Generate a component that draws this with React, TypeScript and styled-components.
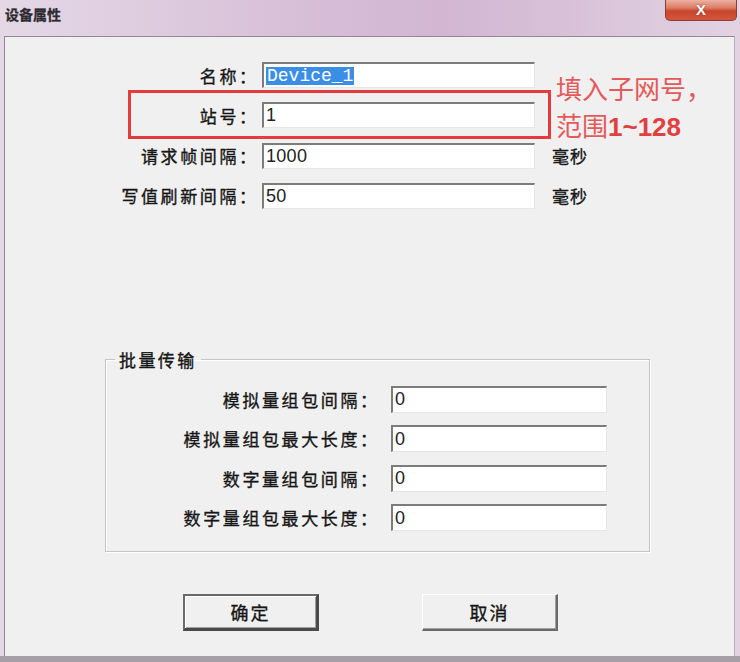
import styled, { createGlobalStyle } from "styled-components";

const GlobalStyle = createGlobalStyle`
  html, body {
    margin: 0;
    padding: 0;
    background: #d9c9d9;
  }
  body {
    font-family: "Noto Sans CJK SC", "Liberation Sans", sans-serif;
  }
`;

const Frame = styled.div`
  width: 740px;
  height: 662px;
  display: flex;
  flex-direction: column;
  box-sizing: border-box;
  padding: 0 5px 0 4px;
  background: linear-gradient(90deg, #e4d8e6 0%, #d6bcd6 45%, #d2b6d2 60%, #e2d2e2 100%);
  border-bottom: 6px solid #a79fa7;
`;

const TitleBar = styled.div`
  height: 36px;
  flex: none;
  display: flex;
  justify-content: space-between;
  align-items: flex-start;
  margin-right: -2px;
`;

const Title = styled.div`
  padding: 4px 0 0 1px;
  font-size: 14px;
  font-weight: 700;
  color: #2e2a30;
  letter-spacing: 0;
  -webkit-text-stroke: 0.3px #2e2a30;
`;

const CloseButton = styled.div`
  width: 72px;
  height: 21px;
  box-sizing: border-box;
  border: 1px solid #8e3d33;
  border-top: none;
  border-radius: 0 0 5px 5px;
  background: linear-gradient(180deg, #eab2a4 0%, #dc7a62 40%, #c9452c 55%, #d0583c 100%);
  color: #fff;
  font-family: "Liberation Sans", sans-serif;
  font-weight: 700;
  font-size: 15px;
  line-height: 19px;
  text-align: center;
  text-shadow: 0 0 2px #7a2a1e;
`;

const Client = styled.div`
  flex: 1;
  position: relative;
  background: #f0f0f0;
  border: 1px solid #8c8a8c;
  border-right-color: #b9b0b9;
  border-bottom: none;
`;

const FieldGrid = styled.div<{ $label: number; $input: number; $gap: number; $rowGap: number; $rowHeight: number }>`
  display: grid;
  grid-template-columns: ${(p) => `${p.$label}px ${p.$input}px auto`};
  grid-auto-rows: ${(p) => p.$rowHeight}px;
  column-gap: ${(p) => p.$gap}px;
  row-gap: ${(p) => p.$rowGap}px;
  align-items: center;
`;

const TopFields = styled(FieldGrid)`
  padding-top: 25px;
`;

const Label = styled.div`
  text-align: right;
  font-size: 17px;
  letter-spacing: 2.6px;
  margin-right: -2.6px;
  color: #161616;
  white-space: nowrap;
  -webkit-text-stroke: 0.35px #161616;
`;

const Field = styled.div`
  height: 100%;
  box-sizing: border-box;
  background: #fff;
  border-top: 2px solid #7c7c7c;
  border-left: 2px solid #7c7c7c;
  border-right: 1px solid #e6e6e6;
  border-bottom: 1px solid #e6e6e6;
  padding-left: 2px;
  display: flex;
  align-items: center;
  font-family: "Liberation Sans", sans-serif;
  font-size: 18px;
  letter-spacing: 0.3px;
  color: #222;
`;

const Selected = styled.span`
  background: #3a8ee6;
  color: #fff;
  font-family: "Liberation Mono", monospace;
  font-size: 18px;
  letter-spacing: 0;
  line-height: 18px;
  padding: 0 1px;
`;

const Unit = styled.div`
  padding-left: 11px;
  font-size: 17px;
  letter-spacing: 1px;
  color: #161616;
  -webkit-text-stroke: 0.35px #161616;
`;

const Highlight = styled.div`
  position: absolute;
  left: 123px;
  top: 53px;
  width: 423px;
  height: 49px;
  box-sizing: border-box;
  border: 3px solid #e43c3c;
`;

const Note = styled.div`
  position: absolute;
  left: 551px;
  top: 32px;
  font-size: 26px;
  line-height: 37px;
  color: #e45a5a;
  white-space: nowrap;
  b {
    font-family: "Liberation Sans", sans-serif;
    font-weight: 700;
    color: #e04040;
  }
`;

const GroupBox = styled.fieldset`
  margin: 141px 0 0 100px;
  width: 545px;
  height: 202px;
  box-sizing: border-box;
  padding: 0;
  border: 1px solid #c4c4c4;
  box-shadow: inset 1px 1px 0 #fff, 1px 1px 0 #fff;
  legend {
    margin-left: 9px;
    padding: 0 4px;
    font-size: 17px;
    line-height: 20px;
    letter-spacing: 2.4px;
    color: #161616;
    -webkit-text-stroke: 0.35px #161616;
  }
`;

const GroupFields = styled(FieldGrid)`
  padding-top: 16px;
`;

const ButtonRow = styled.div`
  display: flex;
  gap: 103px;
  margin: 42px 0 0 178px;
`;

const Button = styled.button<{ $default?: boolean }>`
  width: 136px;
  height: 37px;
  box-sizing: border-box;
  background: #f0f0f0;
  font-family: "Noto Sans CJK SC", sans-serif;
  font-size: 18px;
  letter-spacing: 2px;
  color: #161616;
  -webkit-text-stroke: 0.35px #161616;
  padding: 0;
  border-style: solid;
  border-width: ${(p) => (p.$default ? "2px 3px 3px 2px" : "1px 2px 2px 1px")};
  border-color: ${(p) =>
    p.$default ? "#6a6a6a #4a4a4a #4a4a4a #6a6a6a" : "#ffffff #6a6a6a #6a6a6a #ffffff"};
  box-shadow: ${(p) => (p.$default ? "inset 1px 1px 0 #fff, inset -1px -1px 0 #a0a0a0" : "inset -1px -1px 0 #a0a0a0")};
`;

const topRows = [
  { label: "名称：", value: "Device_1", selected: true },
  { label: "站号：", value: "1" },
  { label: "请求帧间隔：", value: "1000", unit: "毫秒" },
  { label: "写值刷新间隔：", value: "50", unit: "毫秒" },
];

const groupRows = [
  { label: "模拟量组包间隔：", value: "0" },
  { label: "模拟量组包最大长度：", value: "0" },
  { label: "数字量组包间隔：", value: "0" },
  { label: "数字量组包最大长度：", value: "0" },
];

export default function App() {
  return (
    <>
      <GlobalStyle />
      <Frame>
        <TitleBar>
          <Title>设备属性</Title>
          <CloseButton>X</CloseButton>
        </TitleBar>
        <Client>
          <TopFields $label={251} $input={273} $gap={6} $rowGap={14.3} $rowHeight={26}>
            {topRows.map((r) => (
              <>
                <Label key={r.label}>{r.label}</Label>
                <Field>{r.selected ? <Selected>{r.value}</Selected> : r.value}</Field>
                <Unit>{r.unit}</Unit>
              </>
            ))}
          </TopFields>

          <Highlight />
          <Note>
            填入子网号，
            <br />
            范围<b>1~128</b>
          </Note>

          <GroupBox>
            <legend>批量传输</legend>
            <GroupFields $label={271} $input={216} $gap={14} $rowGap={12.5} $rowHeight={27}>
              {groupRows.map((r) => (
                <>
                  <Label key={r.label}>{r.label}</Label>
                  <Field>{r.value}</Field>
                  <div />
                </>
              ))}
            </GroupFields>
          </GroupBox>

          <ButtonRow>
            <Button $default>确定</Button>
            <Button>取消</Button>
          </ButtonRow>
        </Client>
      </Frame>
    </>
  );
}
